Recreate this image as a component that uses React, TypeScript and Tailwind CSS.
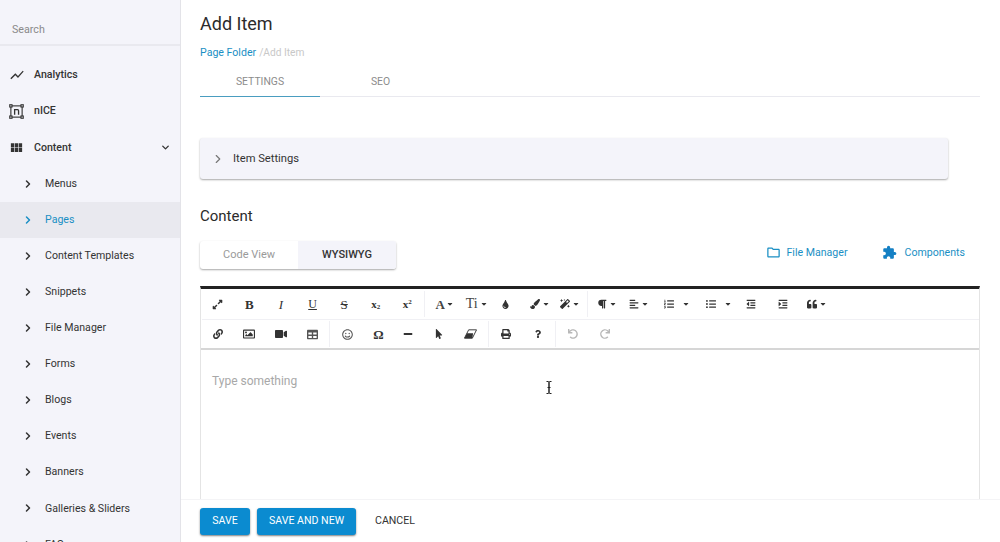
import type { ComponentType, ReactNode } from 'react'
import { FiChevronDown, FiChevronRight } from 'react-icons/fi'
import { MdExtension, MdOutlineFolder, MdViewModule, MdShowChart } from 'react-icons/md'
import {
  FaAlignLeft,
  FaCaretDown,
  FaExpandAlt,
  FaIndent,
  FaLink,
  FaListOl,
  FaListUl,
  FaMagic,
  FaMinus,
  FaMousePointer,
  FaOutdent,
  FaPaintBrush,
  FaParagraph,
  FaPrint,
  FaQuestion,
  FaQuoteLeft,
  FaRedo,
  FaRegImage,
  FaRegSmile,
  FaTable,
  FaTint,
  FaUndo,
  FaVideo,
} from 'react-icons/fa'

const subItems = [
  'Menus',
  'Pages',
  'Content Templates',
  'Snippets',
  'File Manager',
  'Forms',
  'Blogs',
  'Events',
  'Banners',
  'Galleries & Sliders',
  'FAQs',
]

type IconType = ComponentType<{ className?: string }>

function NiceIcon() {
  return (
    <svg viewBox="0 0 16 16" className="h-[15px] w-[15px] text-[#333]" fill="none" stroke="currentColor" strokeWidth="1.2">
      <rect x="2" y="2" width="12" height="12" />
      <rect x="0.8" y="0.8" width="2.4" height="2.4" fill="#f4f4fa" />
      <rect x="12.8" y="0.8" width="2.4" height="2.4" fill="#f4f4fa" />
      <rect x="0.8" y="12.8" width="2.4" height="2.4" fill="#f4f4fa" />
      <rect x="12.8" y="12.8" width="2.4" height="2.4" fill="#f4f4fa" />
      <path d="M6 11.5V6h3.2c.8 0 1 .6 1 1.2v4.3" strokeWidth="1.4" />
    </svg>
  )
}

function EraserIcon({ className }: { className?: string }) {
  return (
    <svg viewBox="0 0 14 10" className={className} width="13" height="10" fill="currentColor">
      <path d="M5 0.5h8.5L9 9.5H0.5z" fill="none" stroke="currentColor" strokeWidth="1" />
      <path d="M0.5 9.5L3.2 4.2h6.6L9 9.5z" />
    </svg>
  )
}

function TopItem({ icon, label, chevron }: { icon: ReactNode; label: string; chevron?: boolean }) {
  return (
    <div className="flex h-[36.2px] shrink-0 items-center pl-[9px] pr-[9px] text-[10.6px] font-medium text-[#333]">
      <span className="flex w-[25px] items-center">{icon}</span>
      <span>{label}</span>
      {chevron ? <FiChevronDown className="ml-auto text-[11px] [stroke-width:3]" /> : null}
    </div>
  )
}

function SubItem({ label, active }: { label: string; active?: boolean }) {
  return (
    <div
      className={`flex h-[36.1px] shrink-0 items-center pl-[22px] text-[10.6px] ${
        active ? 'bg-[#e9e9ef] text-[#1a8fc4]' : 'text-[#333]'
      }`}
    >
      <FiChevronRight className="mr-[11px] w-[12px] text-[12px] [stroke-width:3]" />
      <span>{label}</span>
    </div>
  )
}

function Sidebar() {
  return (
    <aside className="flex h-full w-[181px] shrink-0 flex-col overflow-hidden border-r border-[#e3e3e8] bg-[#f4f4fa]">
      <div className="flex h-[46px] shrink-0 items-center border-b-2 border-[#e9e9ef] pl-3 pt-[17px] text-[10.7px] text-[#8a8a8a]">
        Search
      </div>
      <div className="h-[11px] shrink-0" />
      <TopItem icon={<MdShowChart className="text-[16px]" />} label="Analytics" />
      <TopItem icon={<NiceIcon />} label="nICE" />
      <TopItem icon={<MdViewModule className="text-[15px]" />} label="Content" chevron />
      {subItems.map((item) => (
        <SubItem key={item} label={item} active={item === 'Pages'} />
      ))}
    </aside>
  )
}

function Tool({ icon: Icon, size = 'text-[10px]', muted, caret, gap = 'ml-[2px]', w = 'w-[31.6px]', children }: {
  icon?: IconType
  size?: string
  muted?: boolean
  caret?: boolean
  gap?: string
  w?: string
  children?: ReactNode
}) {
  return (
    <span className={`flex shrink-0 items-center justify-center ${w} ${muted ? 'text-[#b8b8b8]' : 'text-[#333]'}`}>
      {Icon ? <Icon className={size} /> : children}
      {caret ? <FaCaretDown className={`${gap} text-[8px]`} /> : null}
    </span>
  )
}

function Glyph({ className, children }: { className?: string; children: ReactNode }) {
  return <span className={`font-['Liberation_Serif',serif] leading-none ${className}`}>{children}</span>
}

function Divider() {
  return (
    <span className="flex w-[3px] shrink-0 justify-center">
      <span className="h-[26px] w-px bg-[#f0f0f4]" />
    </span>
  )
}

function Toolbar() {
  return (
    <div className="border-b-2 border-[#d6d6d6] pl-[1px]">
      <div className="flex h-[31px] items-center border-b border-[#f0f0f4]">
        <Tool icon={FaExpandAlt} size="text-[11px]" />
        <Tool><Glyph className="text-[13px] font-bold">B</Glyph></Tool>
        <Tool><Glyph className="text-[13px] italic">I</Glyph></Tool>
        <Tool><Glyph className="text-[12px] underline">U</Glyph></Tool>
        <Tool><Glyph className="text-[13px] line-through">S</Glyph></Tool>
        <Tool><Glyph className="text-[11px] font-bold">x<sub className="text-[7px]">2</sub></Glyph></Tool>
        <Tool><Glyph className="text-[11px] font-bold">x<sup className="text-[7px]">2</sup></Glyph></Tool>
        <Divider />
        <Tool caret gap="ml-[1px]" w="w-[37px]"><Glyph className="text-[13px] font-bold text-[#444]">A</Glyph></Tool>
        <Tool caret w="w-[27px]"><Glyph className="text-[14px] text-[#444]">Ti</Glyph></Tool>
        <Tool icon={FaTint} size="text-[9px]" w="w-[31px]" />
        <Tool icon={FaPaintBrush} caret w="w-[38px]" />
        <Tool icon={FaMagic} caret w="w-[21px]" />
        <span className="w-[6px] shrink-0" />
        <Divider />
        <Tool icon={FaParagraph} caret w="w-[35px]" />
        <Tool icon={FaAlignLeft} caret w="w-[29px]" />
        <Tool icon={FaListOl} caret gap="ml-[8px]" w="w-[48px]" />
        <Tool icon={FaListUl} caret gap="ml-[8px]" w="w-[36px]" />
        <Tool icon={FaOutdent} w="w-[27px]" />
        <Tool icon={FaIndent} w="w-[37px]" />
        <Tool icon={FaQuoteLeft} caret w="w-[31px]" />
      </div>
      <div className="flex h-[28px] items-center">
        <Tool icon={FaLink} />
        <Tool icon={FaRegImage} size="text-[12px]" />
        <Tool icon={FaVideo} size="text-[12px]" />
        <Tool icon={FaTable} size="text-[11px] text-[#555]" />
        <Divider />
        <Tool icon={FaRegSmile} size="text-[11px] text-[#555]" w="w-[32px]" />
        <Tool w="w-[30px]"><Glyph className="text-[13px] font-bold">Ω</Glyph></Tool>
        <Tool icon={FaMinus} w="w-[30px]" />
        <Tool icon={FaMousePointer} w="w-[31px]" />
        <Tool icon={EraserIcon} size="" w="w-[33px]" />
        <Divider />
        <Tool icon={FaPrint} w="w-[32px]" />
        <Tool icon={FaQuestion} size="text-[8px]" w="w-[32px]" />
        <Divider />
        <Tool icon={FaUndo} muted w="w-[32px]" />
        <Tool icon={FaRedo} muted w="w-[32px]" />
      </div>
    </div>
  )
}

export default function App() {
  return (
    <div className="flex h-[542px] w-[1000px] overflow-hidden bg-white font-['Roboto',sans-serif] text-[#333]">
      <Sidebar />
      <main className="relative flex min-w-0 flex-1 flex-col">
        <div className="min-h-0 flex-1 overflow-hidden pl-[19px] pr-[20px]">
          <h1 className="pt-[12px] text-[18px] leading-[24px] text-[#2b2b2b]">Add Item</h1>
          <div className="mt-[10px] text-[10.6px] leading-[14px]">
            <span className="text-[#1a8fc4]">Page Folder</span>
            <span className="ml-[3px] text-[10.2px] text-[#c8c8c8]">/Add Item</span>
          </div>
          <div className="mt-[7px] flex h-[30px] border-b border-[#e9e9ef] text-[10.4px] text-[#8c8c8c]">
            <span className="flex h-[30px] w-[120px] items-center justify-center border-b border-[#4a9dc0]">SETTINGS</span>
            <span className="flex w-[121px] items-center justify-center">SEO</span>
          </div>
          <div className="mt-[41px] flex h-[41px] w-[748px] items-center rounded-[3px] bg-[#f4f4fa] pl-[11px] text-[11.2px] text-[#333] shadow-[0_1px_2px_rgba(0,0,0,0.35)]">
            <FiChevronRight className="mr-[8px] w-[14px] text-[14px] text-[#777]" />
            <span className="mt-[2px]">Item Settings</span>
          </div>
          <h2 className="mt-[28px] text-[15px] leading-[18px] text-[#2b2b2b]">Content</h2>
          <div className="mt-[16px] flex items-center justify-between pr-[15px]">
            <div className="flex h-[28px] w-[196px] overflow-hidden rounded-[3px] text-[11px] shadow-[0_1px_2px_rgba(0,0,0,0.35)]">
              <span className="flex w-[98px] items-center justify-center text-[#9a9a9a]">Code View</span>
              <span className="flex flex-1 items-center justify-center bg-[#f4f4fa] font-medium text-[#333]">WYSIWYG</span>
            </div>
            <div className="-mt-[4px] flex items-center text-[10.6px] text-[#1a8fc4]">
              <MdOutlineFolder className="mr-[5px] text-[15px]" />
              File Manager
              <MdExtension className="ml-[34px] mr-[8px] text-[15px] text-[#1580c4]" />
              Components
            </div>
          </div>
          <div className="mt-[17px] h-[300px] border-t-[3px] border-x border-x-[#e4e4e4] border-t-[#222] bg-white">
            <Toolbar />
            <div className="pl-[11px] pt-[23px] text-[12px] leading-[16px] text-[#a8a8a8]">Type something</div>
          </div>
        </div>
        <div className="flex h-[43px] shrink-0 items-center border-t border-[#f4f4f6] bg-white pl-[19px] text-[10.6px]">
          <span className="flex h-[27px] w-[50px] items-center justify-center rounded-[3px] bg-[#0b8bd0] text-white shadow-[0_1px_2px_rgba(0,0,0,0.5)]">SAVE</span>
          <span className="ml-[7px] flex h-[27px] w-[99px] items-center justify-center rounded-[3px] bg-[#0b8bd0] text-white shadow-[0_1px_2px_rgba(0,0,0,0.5)]">SAVE AND NEW</span>
          <span className="ml-[19px] text-[#333]">CANCEL</span>
        </div>
        <svg viewBox="0 0 8 13" className="absolute left-[364px] top-[381px] h-[13px] w-[8px] text-[#222]" fill="none" stroke="currentColor" strokeWidth="1">
          <path d="M1.5.5h1.5c.6 0 1 .4 1 1v10c0 .6.4 1 1 1h1.5M6.5.5H5c-.6 0-1 .4-1 1v10c0 .6-.4 1-1 1H1.5M2.5 6.5h3" />
        </svg>
      </main>
    </div>
  )
}
